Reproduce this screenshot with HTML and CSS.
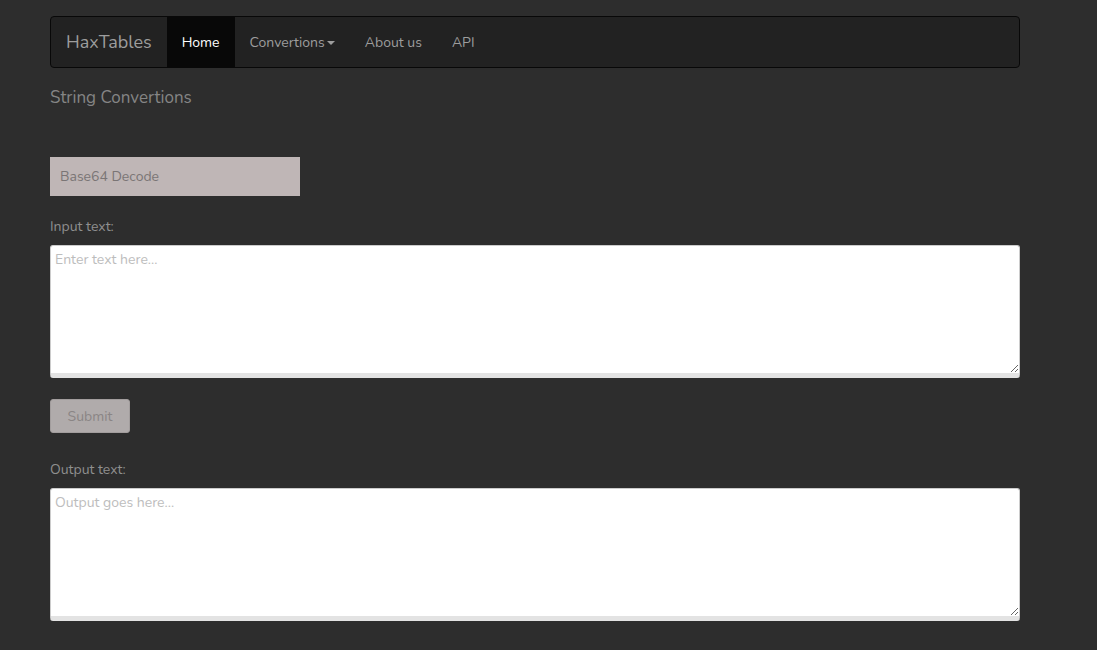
FILE: index.html
```html
<!DOCTYPE html>
<html lang="en">
<head>
  <meta charset="UTF-8" />
  <meta name="viewport" content="width=device-width, initial-scale=1.0" />
  <title>HaxTables — String Convertions</title>
  <link rel="stylesheet" href="styles.css">
</head>
<body>

<div class="container">

  <nav class="navbar">
    <a class="brand" href="#">HaxTables</a>
    <ul class="nav">
      <li class="active"><a href="#">Home</a></li>
      <li><a href="#">Convertions<span class="caret"></span></a></li>
      <li><a href="#">About us</a></li>
      <li><a href="#">API</a></li>
    </ul>
  </nav>

  <h4 class="titulo">String Convertions</h4>

  <div class="select">Base64 Decode</div>

  <label class="rotulo" for="entrada">Input text:</label>
  <textarea id="entrada" class="campo" placeholder="Enter text here..."></textarea>

  <button class="botao">Submit</button>

  <label class="rotulo" for="saida">Output text:</label>
  <textarea id="saida" class="campo" placeholder="Output goes here..."></textarea>

</div>

</body>
</html>
```

FILE: styles.css
```css
*, *::before, *::after { box-sizing: border-box; margin: 0; padding: 0; }

:root {
  --bg:       #2d2d2d;
  --nav:      #222222;
  --nav-dark: #080808;
  --text:     #8c8c8c;
  --text2:    #9d9d9d;
}

body {
  font-family: "Nunito", Lato, "Open Sans", Arial, sans-serif;
  background: var(--bg);
  color: var(--text);
  font-size: 14px;
}

.container {
  width: 970px;
  margin-left: 50px;
  padding-top: 16px;
}

/* ── NAVBAR ───────────────────────────────────── */
.navbar {
  display: flex;
  align-items: stretch;
  height: 52px;
  background: var(--nav);
  border: 1px solid #080808;
  border-radius: 4px;
}

.brand {
  display: flex;
  align-items: center;
  padding: 0 15px;
  font-size: 18px;
  color: var(--text2);
  text-decoration: none;
}

.nav { display: flex; list-style: none; }

.nav a {
  display: flex;
  align-items: center;
  height: 100%;
  padding: 0 15px;
  color: var(--text2);
  text-decoration: none;
}

.nav .active a { background: var(--nav-dark); color: #fff; }

.caret {
  display: inline-block;
  width: 0; height: 0;
  margin-left: 2px;
  margin-top: 2px;
  border-top: 4px solid;
  border-left: 4px solid transparent;
  border-right: 4px solid transparent;
}

/* ── CONTEUDO ─────────────────────────────────── */
.titulo {
  font-size: 17px;
  font-weight: 400;
  color: #858585;
  margin-top: 19px;
  line-height: 22px;
}

.select {
  width: 250px;
  height: 39px;
  margin-top: 48px;
  padding: 0 10px;
  display: flex;
  align-items: center;
  background: #bfb6b6;
  color: #7a7575;
  font-size: 14px;
}

.rotulo {
  display: block;
  margin-top: 21px;
  margin-bottom: 8px;
  color: #8f8f8f;
  font-size: 14px;
  line-height: 20px;
}

.campo {
  display: block;
  width: 100%;
  height: 133px;
  padding: 4px 4px;
  background: #fff;
  border: 1px solid #ccc;
  border-bottom: 5px solid #e3e3e3;
  border-radius: 3px;
  font-family: inherit;
  font-size: 14px;
  color: #555;
}

.campo::placeholder { color: #bdbdbd; }

.botao {
  display: block;
  margin-top: 21px;
  width: 80px;
  height: 34px;
  background: #b0abab;
  border: 1px solid #a29d9d;
  border-radius: 3px;
  color: #8a8585;
  font-family: inherit;
  font-size: 14px;
}

.botao + .rotulo { margin-top: 27px; }
```
